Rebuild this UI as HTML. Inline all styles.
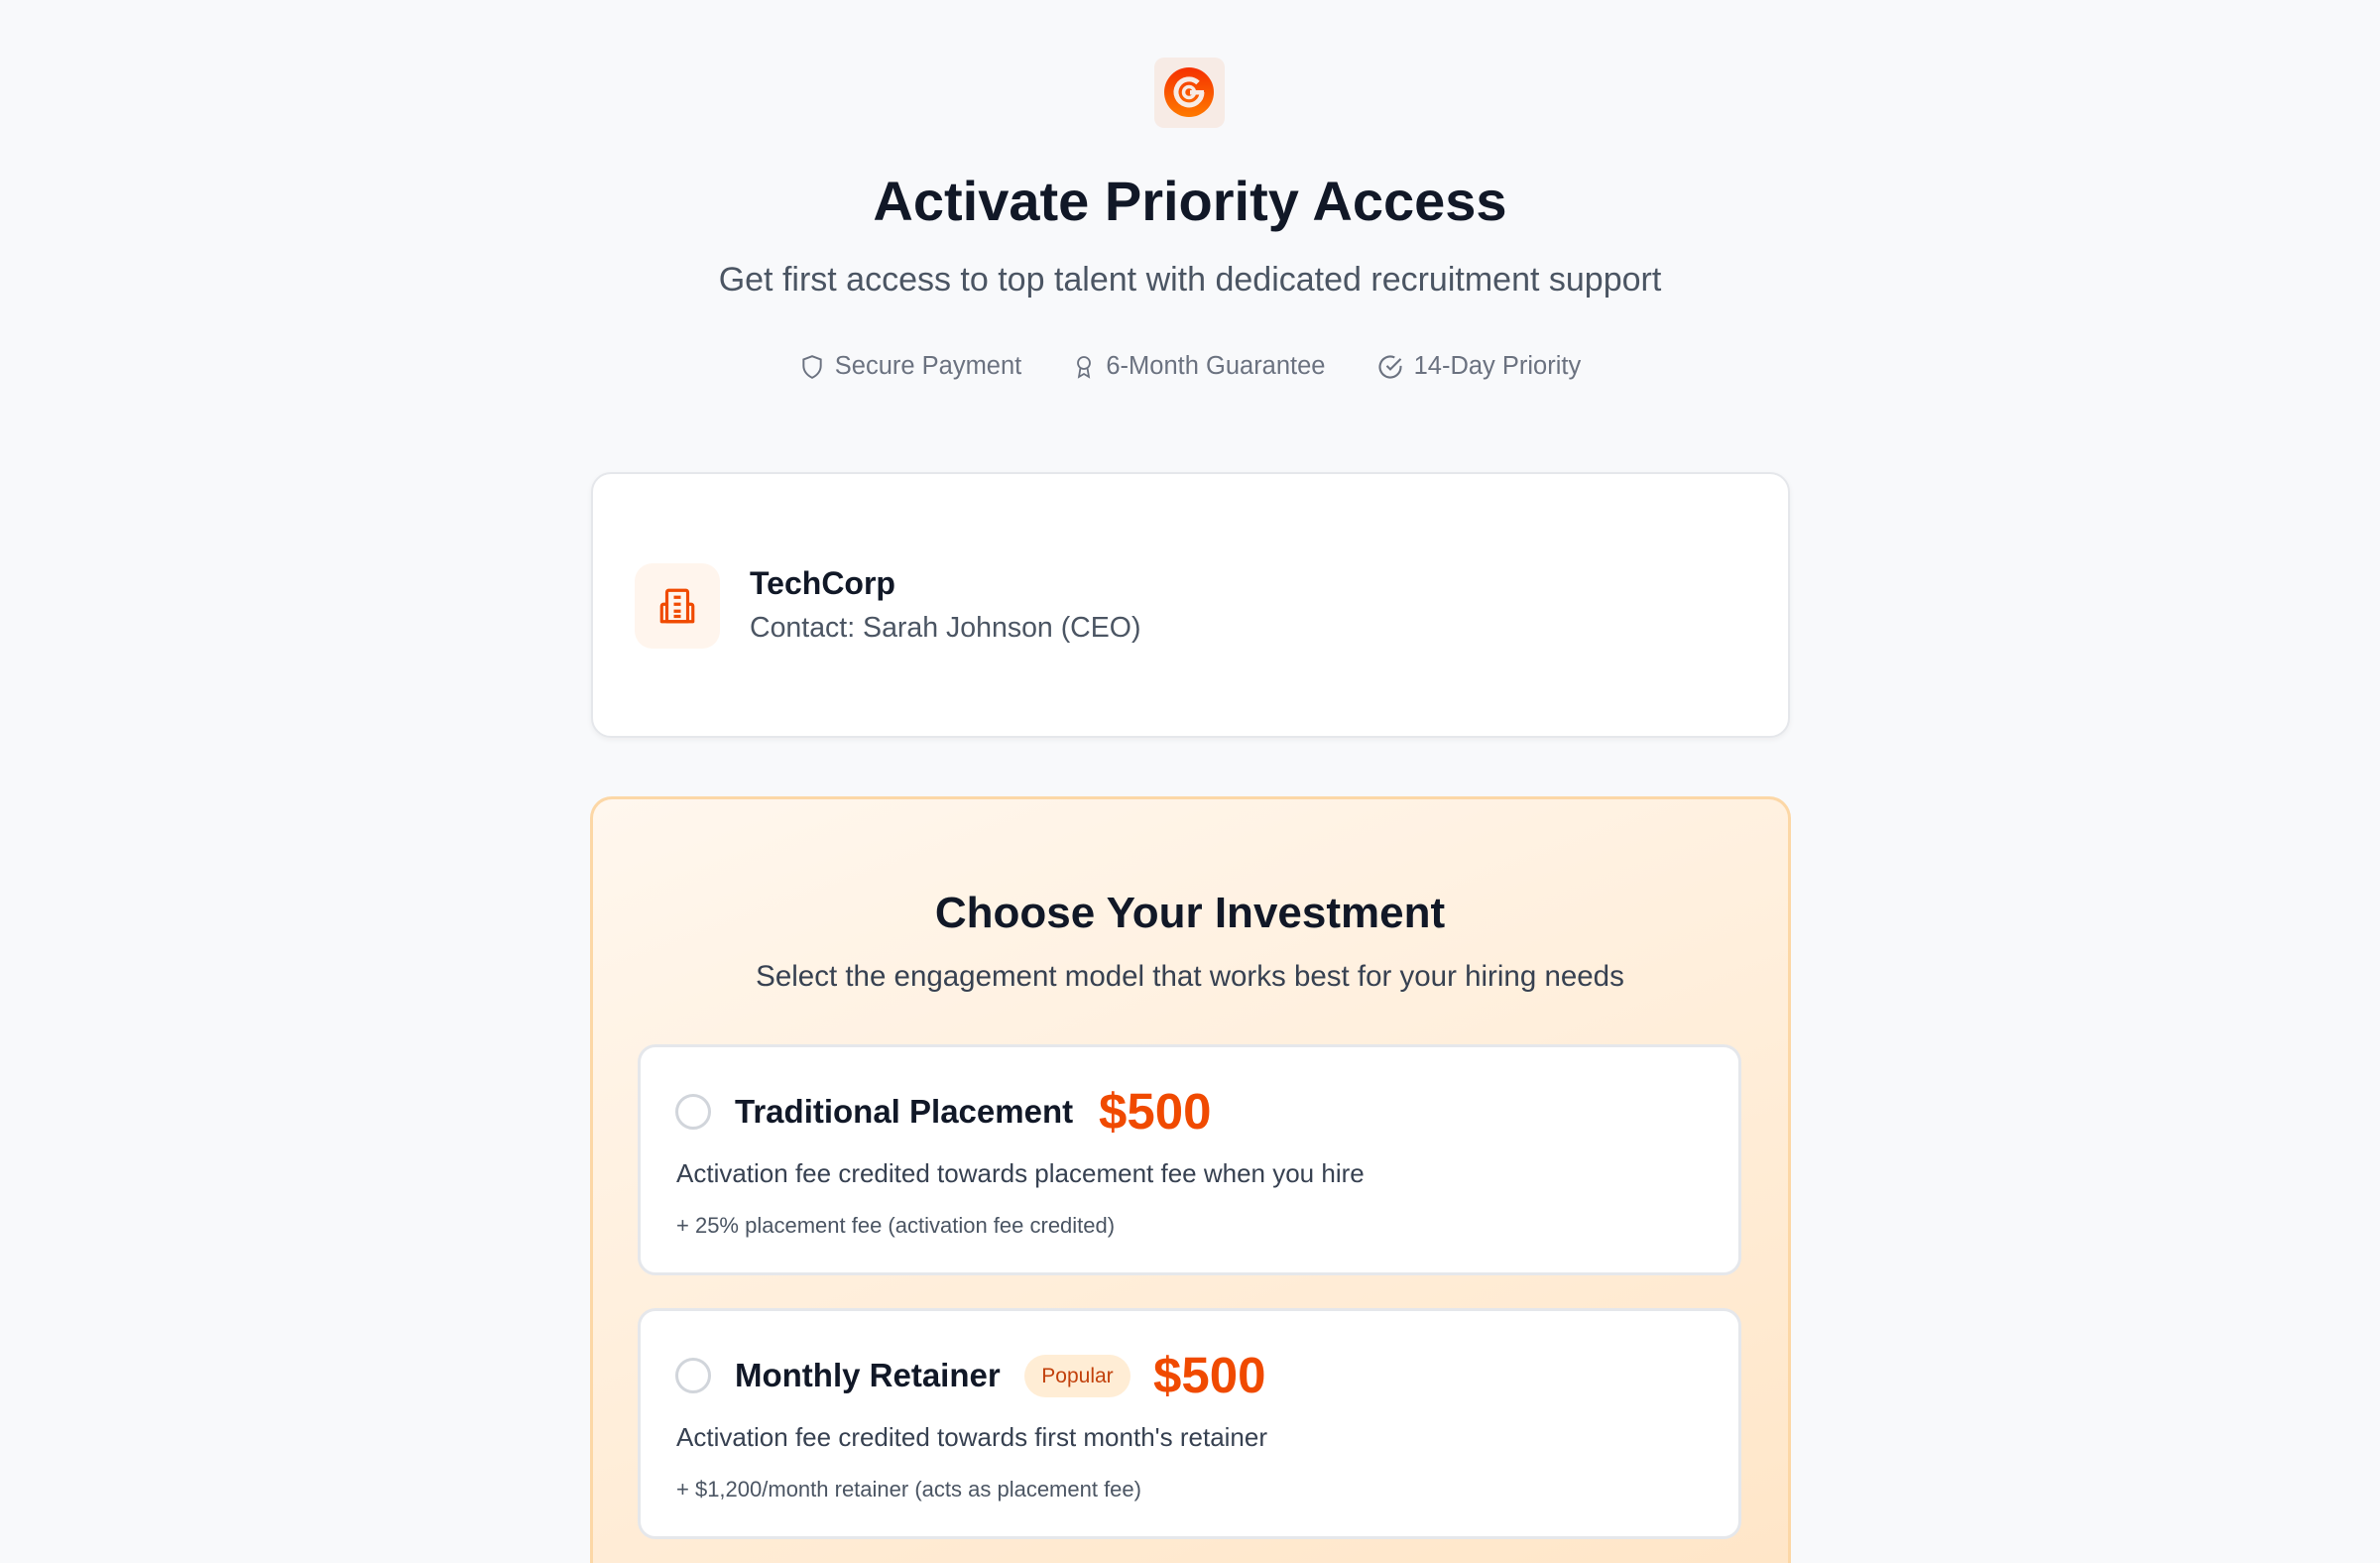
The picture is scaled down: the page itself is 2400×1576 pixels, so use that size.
<!DOCTYPE html>
<html><head><meta charset="utf-8"><style>
*{margin:0;padding:0;box-sizing:border-box}
html,body{width:2400px;height:1576px;overflow:hidden;background:#f8f9fb;font-family:"Liberation Sans",sans-serif;color:#111827}
#w{position:relative;width:2400px;height:1576px;overflow:hidden}
.abs{position:absolute}
.c{left:0;width:2400px;text-align:center}
.card{position:absolute;left:596px;width:1209px;background:#fff;border:2px solid #e5e7eb;border-radius:20px;box-shadow:0 2px 6px rgba(0,0,0,.05)}
.opt{position:absolute;left:643px;width:1113px;height:233px;background:#fff;border:3px solid #e5e7eb;border-radius:18px}
.radio{position:absolute;left:35px;width:36px;height:36px;border:3px solid #d1d5db;border-radius:50%}
.ot{position:absolute;left:95px;font-size:33px;font-weight:bold;color:#111827;white-space:nowrap}
.price{position:absolute;font-size:51px;font-weight:bold;color:#f04a00}
.d1{position:absolute;left:36px;font-size:26px;color:#374151}
.d2{position:absolute;left:36px;font-size:22px;color:#4b5563}
</style></head><body><div id="w">
<div class="abs" style="left:1164px;top:58px;width:71px;height:71px;border-radius:10px;background:#f7ebe5"></div>
<svg class="abs" style="left:1173px;top:67px" width="52" height="52" viewBox="0 0 52 52">
<defs><linearGradient id="g" x1="0" y1="0" x2="0" y2="1"><stop offset="0" stop-color="#f53000"/><stop offset="1" stop-color="#ff7a00"/></linearGradient></defs>
<circle cx="26" cy="26" r="25" fill="url(#g)"/>
<path d="M39 26a13 13 0 1 1-4-9.5" fill="none" stroke="#f7ebe5" stroke-width="5"/>
<circle cx="26" cy="26" r="5.5" fill="none" stroke="#f7ebe5" stroke-width="3.5"/>
<rect x="27" y="24" width="14" height="4.5" fill="#f7ebe5"/>
</svg>
<div class="abs c" style="top:170px;font-size:56px;font-weight:bold;color:#111827">Activate Priority Access</div>
<div class="abs c" style="top:263px;font-size:34px;color:#4b5563">Get first access to top talent with dedicated recruitment support</div>
<div class="abs c" style="top:355px;font-size:25.5px;color:#6b7280;white-space:nowrap">
<span style="display:inline-flex;align-items:center;gap:10px"><svg width="26" height="28" viewBox="0 0 24 24" fill="none" stroke="#6b7280" stroke-width="1.8"><path d="M12 2l8 3v6c0 5-3.5 9-8 11-4.5-2-8-6-8-11V5z"/></svg>Secure Payment</span>
<span style="display:inline-flex;align-items:center;gap:10px;margin-left:44px"><svg width="24" height="28" viewBox="0 0 24 24" fill="none" stroke="#6b7280" stroke-width="1.8"><circle cx="12" cy="8" r="6"/><path d="M8.5 13L7 22l5-3 5 3-1.5-9"/></svg>6-Month Guarantee</span>
<span style="display:inline-flex;align-items:center;gap:10px;margin-left:44px"><svg width="28" height="28" viewBox="0 0 24 24" fill="none" stroke="#6b7280" stroke-width="1.8"><path d="M21 11v1a9 9 0 1 1-5.3-8.2"/><path d="M9 11l3 3 9-9"/></svg>14-Day Priority</span>
</div>
<div class="card" style="top:476px;height:268px">
<div class="abs" style="left:42px;top:90px;width:86px;height:86px;border-radius:18px;background:#fff5ed"></div>
<svg class="abs" style="left:64px;top:112px" width="42" height="42" viewBox="0 0 24 24" fill="none" stroke="#f04a00" stroke-width="1.8" stroke-linejoin="round"><path d="M6 21V4a1 1 0 0 1 1-1h10a1 1 0 0 1 1 1v17z"/><path d="M6 11H4a1 1 0 0 0-1 1v9h3M18 11h2a1 1 0 0 1 1 1v9h-3M3 21h18M10 7h4M10 11h4M10 15h4M10 18h4"/></svg>
<div class="abs" style="left:158px;top:92px;font-size:32px;font-weight:bold">TechCorp</div>
<div class="abs" style="left:158px;top:139px;font-size:28.5px;color:#4b5563">Contact: Sarah Johnson (CEO)</div>
</div>
<div class="abs" style="left:595px;top:803px;width:1211px;height:776px;border:3px solid #fcd7a6;border-bottom-width:0;border-radius:22px 22px 0 0;background:linear-gradient(160deg,#fff7ee,#ffe6c8)"></div>
<div class="abs c" style="top:896px;font-size:44px;font-weight:bold">Choose Your Investment</div>
<div class="abs c" style="top:968px;font-size:29.5px;color:#374151">Select the engagement model that works best for your hiring needs</div>
<div class="opt" style="top:1053px">
<div class="radio" style="top:47px"></div>
<div class="ot" style="top:46px">Traditional Placement</div>
<div class="price" style="left:462px;top:35px">$500</div>
<div class="d1" style="top:112px">Activation fee credited towards placement fee when you hire</div>
<div class="d2" style="top:167px">+ 25% placement fee (activation fee credited)</div>
</div>
<div class="opt" style="top:1319px">
<div class="radio" style="top:47px"></div>
<div class="ot" style="top:46px">Monthly Retainer</div>
<div class="abs" style="left:387px;top:44px;width:107px;height:43px;border-radius:22px;background:#ffedd5;color:#c2410c;font-size:21px;line-height:43px;text-align:center">Popular</div>
<div class="price" style="left:517px;top:35px">$500</div>
<div class="d1" style="top:112px">Activation fee credited towards first month's retainer</div>
<div class="d2" style="top:167px">+ $1,200/month retainer (acts as placement fee)</div>
</div>
</div></body></html>
